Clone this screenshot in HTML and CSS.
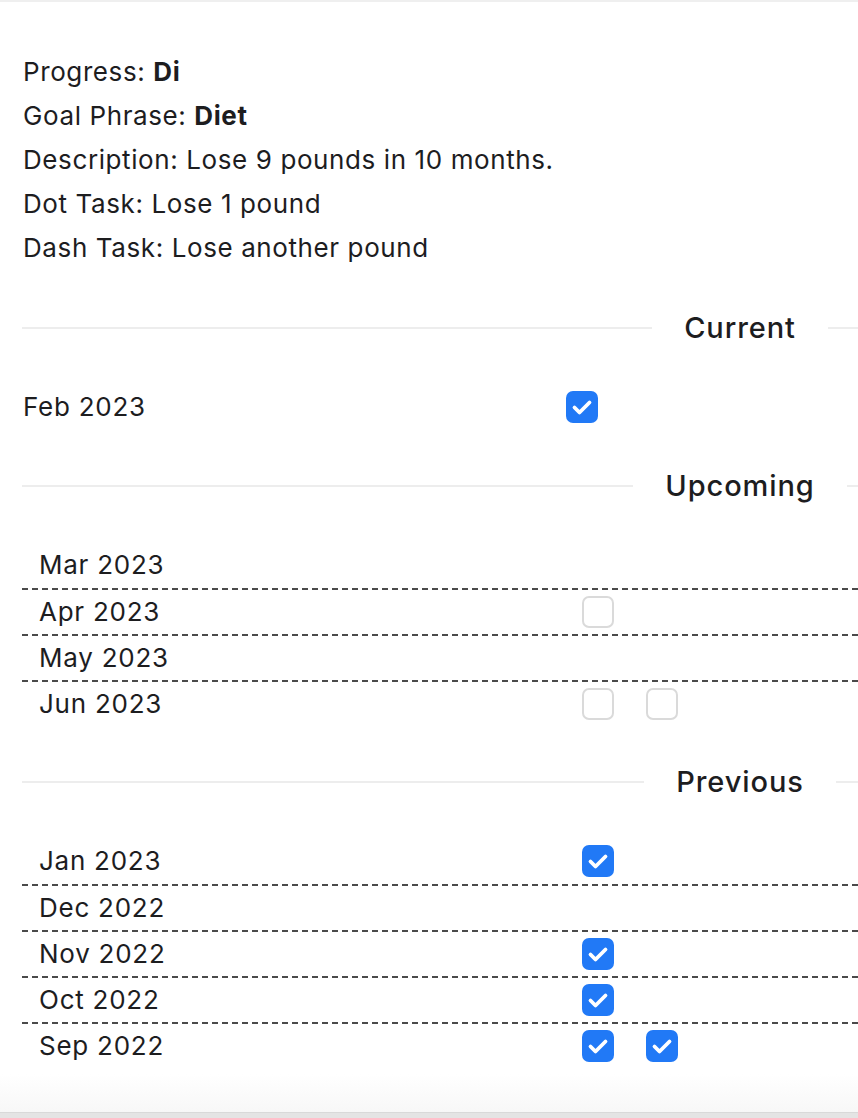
FILE: index.html
```html
<!DOCTYPE html>
<html lang="en">
<head>
<meta charset="utf-8">
<title>Goal Progress</title>
<link rel="stylesheet" href="styles.css">
</head>
<body>
<div class="frame">
  <main class="page">
    <div class="info">
      <p>Progress: <b>Di</b></p>
      <p>Goal Phrase: <b>Diet</b></p>
      <p>Description: Lose 9 pounds in 10 months.</p>
      <p>Dot Task: Lose 1 pound</p>
      <p>Dash Task: Lose another pound</p>
    </div>

    <section class="section">
      <div class="sec-head"><span class="line"></span><span class="label-box"><span class="line"></span><h2>Current</h2><span class="line"></span></span></div>
      <div class="row plain">
        <span class="month">Feb 2023</span>
        <span class="boxes"><span class="cb on"><svg viewBox="0 0 32 32"><path d="M8.5 16.5l5 5 10-10"/></svg></span></span>
      </div>
    </section>

    <section class="section">
      <div class="sec-head"><span class="line"></span><span class="label-box"><span class="line"></span><h2>Upcoming</h2><span class="line"></span></span></div>
      <div class="list">
        <div class="row"><span class="month">Mar 2023</span><span class="boxes"></span></div>
        <div class="row"><span class="month">Apr 2023</span><span class="boxes"><span class="cb"></span></span></div>
        <div class="row"><span class="month">May 2023</span><span class="boxes"></span></div>
        <div class="row"><span class="month">Jun 2023</span><span class="boxes"><span class="cb"></span><span class="cb"></span></span></div>
      </div>
    </section>

    <section class="section">
      <div class="sec-head"><span class="line"></span><span class="label-box"><span class="line"></span><h2>Previous</h2><span class="line"></span></span></div>
      <div class="list">
        <div class="row"><span class="month">Jan 2023</span><span class="boxes"><span class="cb on"><svg viewBox="0 0 32 32"><path d="M8.5 16.5l5 5 10-10"/></svg></span></span></div>
        <div class="row"><span class="month">Dec 2022</span><span class="boxes"></span></div>
        <div class="row"><span class="month">Nov 2022</span><span class="boxes"><span class="cb on"><svg viewBox="0 0 32 32"><path d="M8.5 16.5l5 5 10-10"/></svg></span></span></div>
        <div class="row"><span class="month">Oct 2022</span><span class="boxes"><span class="cb on"><svg viewBox="0 0 32 32"><path d="M8.5 16.5l5 5 10-10"/></svg></span></span></div>
        <div class="row"><span class="month">Sep 2022</span><span class="boxes"><span class="cb on"><svg viewBox="0 0 32 32"><path d="M8.5 16.5l5 5 10-10"/></svg></span><span class="cb on"><svg viewBox="0 0 32 32"><path d="M8.5 16.5l5 5 10-10"/></svg></span></span></div>
      </div>
    </section>
  </main>
</div>
</body>
</html>
```

FILE: styles.css
```css
* { box-sizing: border-box; }

html, body {
  margin: 0;
  padding: 0;
  background: #e4e4e4;
  overflow: hidden;
}

body {
  font-family: Inter, "Noto Sans", "Liberation Sans", sans-serif;
  color: #1d1d1f;
  width: 858px;
  height: 1118px;
}

.frame {
  height: 1113px;
  border-top: 2px solid #efefef;
  background: linear-gradient(to bottom, #ffffff 0, #ffffff 1072px, #f7f7f7 1111px);
  border-bottom: 1px solid #d9d9d9;
}

.page {
  padding: 48px 0 0 22px;
}

.info p {
  margin: 0;
  font-size: 26px;
  line-height: 44px;
  padding-left: 1px;
  letter-spacing: 0.6px;
}

.info b { font-weight: 700; }

.section { margin-top: 36px; }
.section + .section { margin-top: 34px; }

.sec-head {
  display: flex;
  align-items: center;
  height: 44px;
  margin-bottom: 34px;
}

.line {
  flex: 1;
  height: 2px;
  background: #ededed;
}

.label-box {
  width: 236px;
  flex-shrink: 0;
  display: flex;
  align-items: center;
}

.sec-head h2 {
  margin: 0;
  padding: 0 32px;
  font-size: 29px;
  font-weight: 500;
  line-height: 44px;
  white-space: nowrap;
  letter-spacing: 0.9px;
}

.row {
  display: flex;
  align-items: center;
  height: 46px;
  font-size: 26px;
  letter-spacing: 0.75px;
}

.row .month { padding-bottom: 2px; }

.list .row {
  padding-left: 17px;
}

.list .row + .row {
  border-top: 2px dashed #4a4a4a;
}

.row.plain { padding-left: 1px; }

.month {
  width: 543px;
  flex-shrink: 0;
}

.boxes {
  display: flex;
  gap: 32px;
}

.cb {
  width: 32px;
  height: 32px;
  border-radius: 7px;
  border: 2px solid #dadada;
  background: #fff;
  display: block;
}

.cb.on {
  border: none;
  background: #2179f6;
}

.cb svg {
  width: 32px;
  height: 32px;
  display: block;
}

.cb svg path {
  fill: none;
  stroke: #fff;
  stroke-width: 3.8;
  stroke-linecap: round;
  stroke-linejoin: round;
}
```
